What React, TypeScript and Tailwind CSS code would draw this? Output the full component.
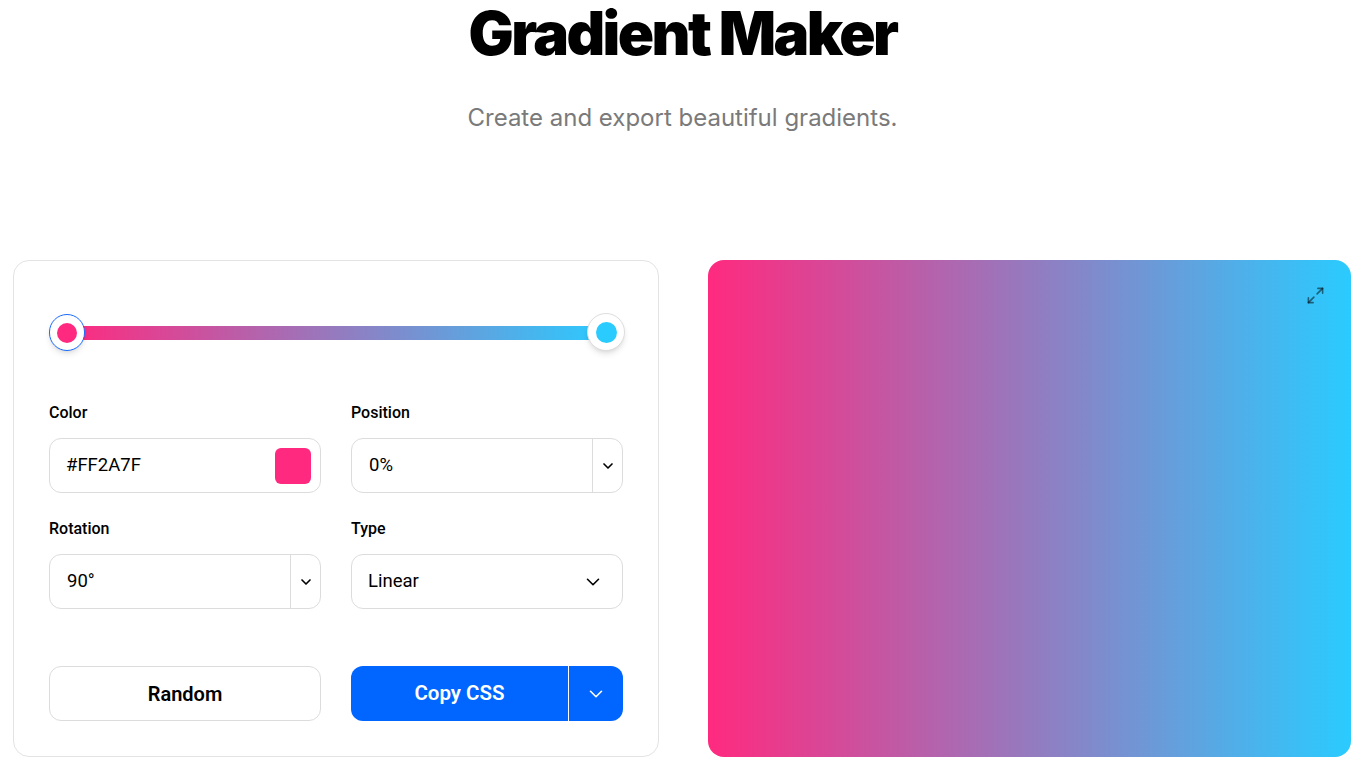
import { ChevronDown, Maximize2 } from "lucide-react"

const PINK = "#FF2A7F"
const CYAN = "#2ACBFF"

const Label = ({ children }: { children: React.ReactNode }) => (
  <div className="text-[16px] font-medium text-black leading-5 mb-[15px]">{children}</div>
)

export default function App() {
  return (
    <div className="min-h-screen bg-white font-['Roboto',sans-serif]">
      <header className="text-center font-['Inter',sans-serif] pt-[3px] pl-[4px]">
        <h1 className="text-[60px] leading-none font-black tracking-[-0.043em] text-black">Gradient Maker</h1>
        <p className="mt-[39px] text-[24px] leading-8 text-[#7a7a7a]">Create and export beautiful gradients.</p>
      </header>

      <main className="grid grid-cols-[646px_1fr] gap-[49px] pl-[13px] pr-[10px] mt-[126px]">
        <section className="rounded-2xl border border-[#e3e3e3] p-[35px]">
          {/* stops slider */}
          <div className="relative h-[72px]">
            <div
              className="absolute left-[18px] right-[16px] h-[14px] top-[30px]"
              style={{ background: `linear-gradient(90deg, ${PINK}, ${CYAN})` }}
            />
            <div className="absolute left-0 top-[18px] w-[36px] h-[37px] rounded-full bg-white border border-[#1a6cff] flex items-center justify-center shadow-md">
              <div className="w-[20px] h-[20px] rounded-full" style={{ background: PINK }} />
            </div>
            <div className="absolute right-[-2px] top-[17px] w-[38px] h-[38px] rounded-full bg-white border border-[#dedede] flex items-center justify-center shadow-md">
              <div className="w-[21px] h-[21px] rounded-full" style={{ background: CYAN }} />
            </div>
          </div>

          <div className="grid grid-cols-2 gap-x-[30px] mt-[35px]">
            <div>
              <Label>Color</Label>
              <div className="h-[55px] rounded-xl border border-[#dcdcdc] flex items-center justify-between pl-[16px] pr-[9px]">
                <span className="text-[18.5px] text-black">#FF2A7F</span>
                <div className="w-[36px] h-[36px] rounded-md" style={{ background: PINK }} />
              </div>
            </div>
            <div>
              <Label>Position</Label>
              <div className="h-[55px] rounded-xl border border-[#dcdcdc] flex items-stretch">
                <span className="flex-1 flex items-center pl-[17px] text-[18.5px] text-black">0%</span>
                <div className="w-[30px] border-l border-[#dcdcdc] flex items-center justify-center">
                  <ChevronDown className="w-[16px] h-[16px]" strokeWidth={2.5} />
                </div>
              </div>
            </div>

            <div className="mt-[26px]">
              <Label>Rotation</Label>
              <div className="h-[55px] rounded-xl border border-[#dcdcdc] flex items-stretch">
                <span className="flex-1 flex items-center pl-[17px] text-[18.5px] text-black">90°</span>
                <div className="w-[30px] border-l border-[#dcdcdc] flex items-center justify-center">
                  <ChevronDown className="w-[16px] h-[16px]" strokeWidth={2.5} />
                </div>
              </div>
            </div>
            <div className="mt-[26px]">
              <Label>Type</Label>
              <div className="h-[55px] rounded-xl border border-[#dcdcdc] flex items-center justify-between pl-[16px] pr-[18px]">
                <span className="text-[18.5px] text-black">Linear</span>
                <ChevronDown className="w-[22px] h-[22px]" strokeWidth={1.75} />
              </div>
            </div>
          </div>

          <div className="grid grid-cols-2 gap-x-[30px] mt-[57px]">
            <button className="h-[55px] rounded-xl border border-[#dcdcdc] bg-white text-[20px] font-semibold text-black">
              Random
            </button>
            <div className="h-[55px] rounded-xl bg-[#0066ff] flex items-stretch text-white">
              <button className="flex-1 text-[20.5px] font-semibold">Copy CSS</button>
              <div className="w-[1px] bg-white" />
              <button className="w-[54px] flex items-center justify-center">
                <ChevronDown className="w-[22px] h-[22px]" strokeWidth={1.75} />
              </button>
            </div>
          </div>
        </section>

        <section
          className="relative rounded-2xl"
          style={{ background: `linear-gradient(90deg, ${PINK}, ${CYAN})` }}
        >
          <Maximize2 className="absolute right-[26px] top-[26px] w-[19px] h-[19px] text-black/50" strokeWidth={2} />
        </section>
      </main>
    </div>
  )
}
